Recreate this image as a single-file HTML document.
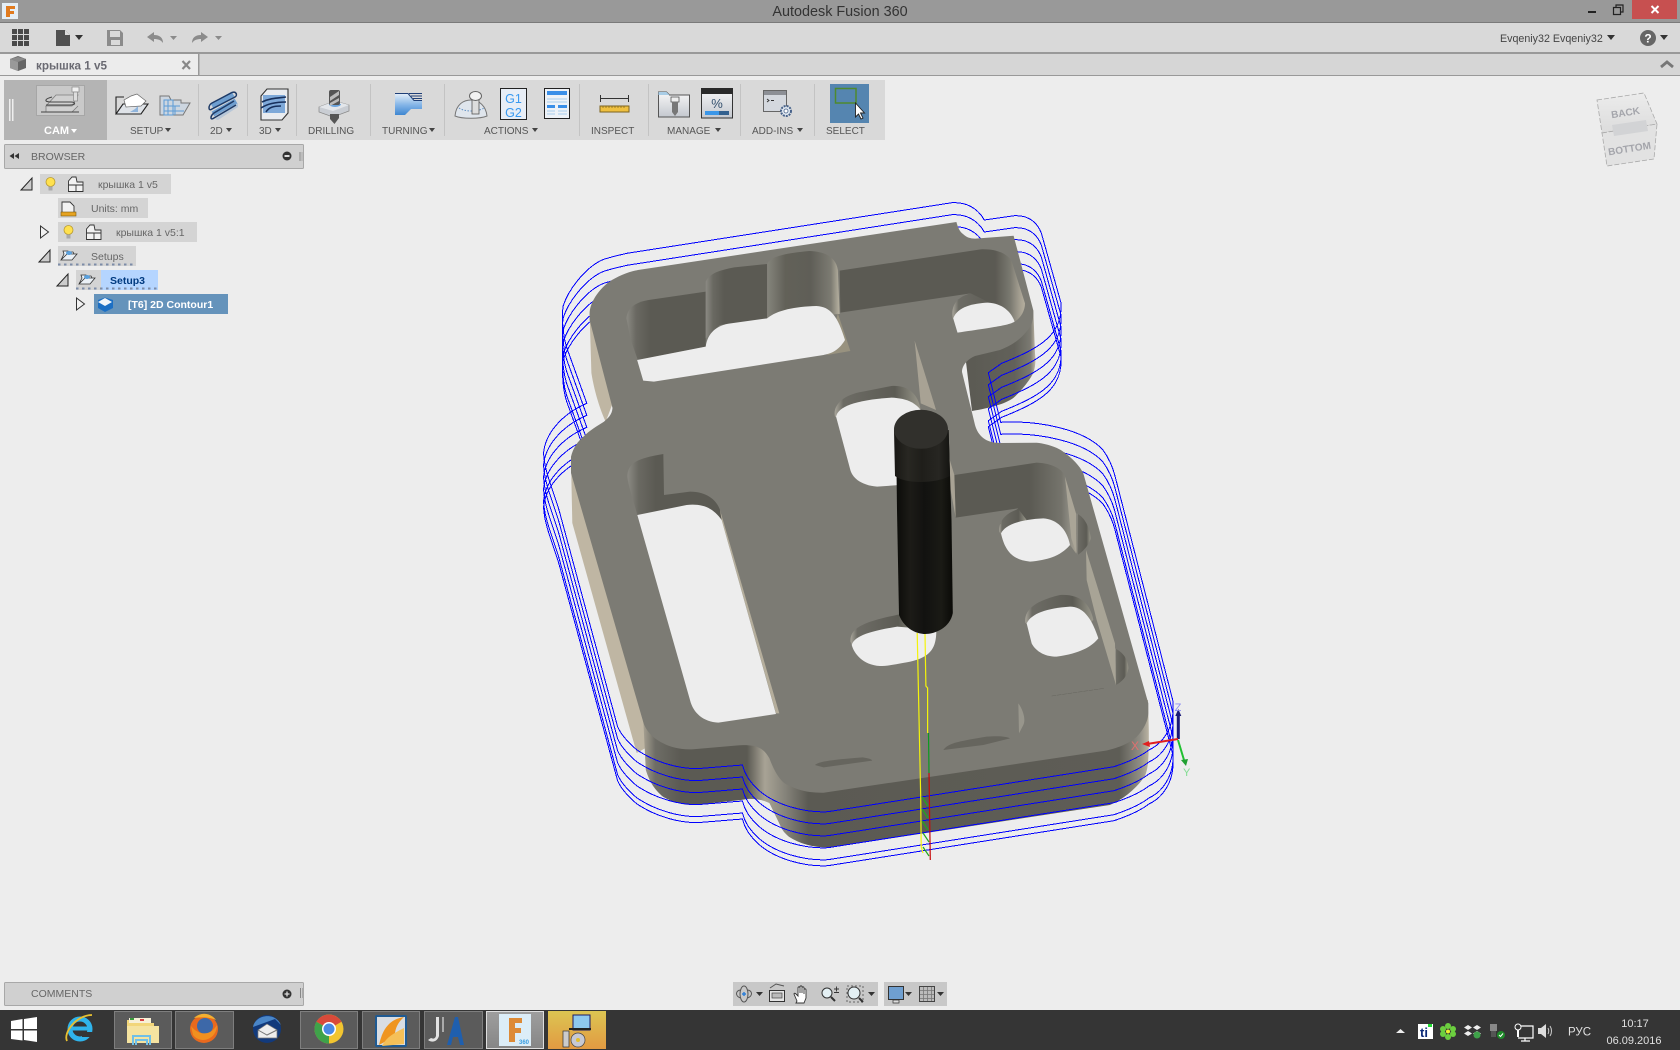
<!DOCTYPE html>
<html lang="ru"><head><meta charset="utf-8"><title>Autodesk Fusion 360</title>
<style>
html,body{margin:0;padding:0;width:1680px;height:1050px;overflow:hidden;background:#ededed}
svg{display:block;position:absolute;left:0;top:0}
text{font-family:"Liberation Sans","Noto Sans CJK SC",sans-serif}
.lb{font-size:10px;fill:#555}
.tr{font-size:10.5px;fill:#666}
</style></head><body>
<svg width="1680" height="1050" viewBox="0 0 1680 1050" xmlns="http://www.w3.org/2000/svg">
<defs>
<linearGradient id="band" gradientUnits="userSpaceOnUse" x1="640" y1="0" x2="1150" y2="0">
<stop offset="0" stop-color="#b5ae9d"/><stop offset=".03" stop-color="#6e6d66"/><stop offset=".08" stop-color="#5b5a53"/><stop offset=".21" stop-color="#5b5a53"/><stop offset=".245" stop-color="#a8a395"/><stop offset=".285" stop-color="#85837a"/><stop offset=".33" stop-color="#5b5a53"/><stop offset=".94" stop-color="#5e5d56"/><stop offset=".98" stop-color="#8f8d84"/><stop offset="1" stop-color="#c0b8a6"/>
</linearGradient>
<linearGradient id="wr" x1="0" x2="1" y1="0" y2="0"><stop offset="0" stop-color="#5b5a53"/><stop offset=".7" stop-color="#62615a"/><stop offset=".93" stop-color="#7b7a72"/><stop offset="1" stop-color="#bdb6a5"/></linearGradient>
<linearGradient id="wl" x1="0" x2="1" y1="0" y2="0"><stop offset="0" stop-color="#8b8a83"/><stop offset=".12" stop-color="#6a6962"/><stop offset=".3" stop-color="#5b5a53"/><stop offset="1" stop-color="#5b5a53"/></linearGradient>
<linearGradient id="wc" x1="0" x2="1" y1="0" y2="0"><stop offset="0" stop-color="#85847c"/><stop offset=".25" stop-color="#626158"/><stop offset=".6" stop-color="#5f5e57"/><stop offset=".88" stop-color="#7c7b72"/><stop offset="1" stop-color="#b8b2a1"/></linearGradient>
<linearGradient id="we" x1="0" x2="1" y1="0" y2="0"><stop offset="0" stop-color="#5b5a53"/><stop offset=".62" stop-color="#5b5a53"/><stop offset=".88" stop-color="#75746c"/><stop offset=".95" stop-color="#8f8d84"/><stop offset="1" stop-color="#a8a394"/></linearGradient>
<linearGradient id="wd" x1="0" x2="1" y1="0" y2="0"><stop offset="0" stop-color="#5b5a53"/><stop offset=".84" stop-color="#5b5a53"/><stop offset=".92" stop-color="#7a7970"/><stop offset=".97" stop-color="#a39e90"/><stop offset="1" stop-color="#b5af9f"/></linearGradient>
<linearGradient id="hw" x1="0" x2="1" y1="0" y2="0"><stop offset="0" stop-color="#a9a69b"/><stop offset=".1" stop-color="#6d6c65"/><stop offset=".7" stop-color="#5c5b54"/><stop offset=".9" stop-color="#858479"/><stop offset="1" stop-color="#9a978b"/></linearGradient>
<linearGradient id="tool" x1="0" x2="1" y1="0" y2="0"><stop offset="0" stop-color="#0b0b08"/><stop offset=".25" stop-color="#1c1b17"/><stop offset=".5" stop-color="#121210"/><stop offset=".8" stop-color="#1a1a15"/><stop offset="1" stop-color="#0a0a07"/></linearGradient>
<linearGradient id="tool2" x1="0" x2="1" y1="0" y2="0"><stop offset="0" stop-color="#181714"/><stop offset=".25" stop-color="#282722"/><stop offset=".5" stop-color="#1f1e1a"/><stop offset=".8" stop-color="#272622"/><stop offset="1" stop-color="#141411"/></linearGradient>
<linearGradient id="cube" x1="0" x2="0" y1="0" y2="1"><stop offset="0" stop-color="#ececec"/><stop offset="1" stop-color="#dcdcdc"/></linearGradient>
<linearGradient id="act" x1="0" x2="0" y1="0" y2="1"><stop offset="0" stop-color="#9e9e9e"/><stop offset="1" stop-color="#868686"/></linearGradient>
<linearGradient id="ylw" x1="0" x2="0" y1="0" y2="1"><stop offset="0" stop-color="#dcc552"/><stop offset="1" stop-color="#e29a42"/></linearGradient>
<linearGradient id="blu" x1="0" x2="0" y1="0" y2="1"><stop offset="0" stop-color="#e2edf8"/><stop offset=".55" stop-color="#7fb2e6"/><stop offset="1" stop-color="#3f87d1"/></linearGradient>
<linearGradient id="gr" x1="0" x2="0" y1="0" y2="1"><stop offset="0" stop-color="#f7f7f7"/><stop offset="1" stop-color="#c4c8cf"/></linearGradient>
<path id="c" fill="none" stroke="#0000ff" stroke-width="1" shape-rendering="crispEdges" d="M952,202.7 C965,202 977,207 984.3,220 L1014.6,215.7 C1030,215 1038,224 1041.4,233.3 L1061,303 C1063,335 1040,348 1001.7,363.3 L988.3,372.7 L1000.7,422.3 C1040,420 1085,430 1103,450 C1110,460 1113,468 1115,476 L1172.7,700 C1176,730 1160,745 1148.8,750 C1140,757 1125,763 1114,766.7 L827.9,811.7 C805,813 775,805 758.5,790 C750,782 745,775 742.5,765 L702,768.3 C680,770 655,762 637,750 C625,740 620,732 617.6,726.7 L559,510 C553,490 544,470 543.6,453 C545,435 560,415 586.8,403.3 L566.4,346.7 C563,335 562,320 562.9,306.7 C568,290 585,268 602,260 C610,257 620,255 627,253.3 Z"/>
</defs>

<!-- backgrounds -->
<rect width="1680" height="1050" fill="#ededed"/>
<rect width="1680" height="22" fill="#999"/><rect y="22" width="1680" height="1" fill="#7a7a7a"/>
<rect y="23" width="1680" height="29" fill="#d9d9d9"/><rect y="52" width="1680" height="2" fill="#999"/>
<rect y="54" width="1680" height="21" fill="#d6d6d6"/><rect y="75" width="1680" height="1" fill="#999"/>
<rect y="54" width="198" height="21" fill="#ececec"/><rect x="198" y="54" width="1.5" height="21" fill="#999"/>

<!-- title bar -->
<rect x="2" y="3" width="16" height="16" fill="#e4eef6"/>
<path d="M6 6h9v3h-5v2h4v3h-4v3H6z" fill="#e07b20"/>
<text x="840" y="16" text-anchor="middle" font-size="14.4" fill="#333">Autodesk Fusion 360</text>
<rect x="1588" y="11" width="8" height="2" fill="#222"/>
<path d="M1613.5 7.500h7v7h-7zM1616 7.500v-2.500h7v7h-2.500" fill="none" stroke="#222" stroke-width="1.200"/>
<rect x="1632" y="0" width="45" height="19" fill="#c75050"/>
<path d="M1651.500 6l7 7m0-7l-7 7" stroke="#fff" stroke-width="2"/>

<!-- quick access -->
<g fill="#4a4a4a"><rect x="12" y="29" width="5" height="5"/><rect x="18" y="29" width="5" height="5"/><rect x="24" y="29" width="5" height="5"/><rect x="12" y="35" width="5" height="5"/><rect x="18" y="35" width="5" height="5"/><rect x="24" y="35" width="5" height="5"/><rect x="12" y="41" width="5" height="5"/><rect x="18" y="41" width="5" height="5"/><rect x="24" y="41" width="5" height="5"/></g>
<path d="M56 30h9l5 5v11H56z" fill="#505050"/><path d="M65 30v5h5z" fill="#dcdcdc"/>
<path d="M75 35h8l-4 5z" fill="#333"/>
<path d="M107 30h13l3 3v13h-16z" fill="#8b8b8b"/><rect x="110" y="31" width="10" height="6" fill="#d9d9d9"/><rect x="111" y="40" width="9" height="5" fill="#d9d9d9"/>
<path d="M147 37l7-5v3c6 0 9 3 9 8-2-3-5-4-9-4v3z" fill="#8b8b8b"/><path d="M170 36h7l-3.500 4z" fill="#8b8b8b"/>
<path d="M208 37l-7-5v3c-6 0-9 3-9 8 2-3 5-4 9-4v3z" fill="#8b8b8b"/><path d="M215 36h7l-3.500 4z" fill="#8b8b8b"/>

<text x="1500" y="42" font-size="10.7" fill="#444">Evqeniy32 Evqeniy32</text>
<path d="M1607 35h8l-4 5z" fill="#333"/>
<circle cx="1648" cy="38" r="8" fill="#666"/><text x="1648" y="42.500" text-anchor="middle" font-size="12" font-weight="bold" fill="#fff">?</text>
<path d="M1660 35h8l-4 5z" fill="#333"/>

<!-- tab -->
<path d="M10 59l8-3 8 3v9l-8 3-8-3z" fill="#666"/><path d="M10 59l8-2 8 2-8 3z" fill="#8a8a8a"/><path d="M18 62v9l-8-3v-9z" fill="#999"/>
<text x="36" y="69.500" font-size="11.700" font-weight="bold" fill="#6a6a72">крышка 1 v5</text>
<path d="M182.500 61l7.500 8m0-8l-7.500 8" stroke="#888" stroke-width="2.200"/>
<path d="M1661 67l6-5 6 5" fill="none" stroke="#777" stroke-width="2.800"/>

<!-- ribbon -->
<rect x="4" y="80" width="881" height="60" fill="#d9d9d9"/>
<rect x="4" y="80" width="103" height="60" fill="#b4b4b4"/>
<g fill="#c3c3c3"><rect x="198" y="84" width="1" height="52"/><rect x="247" y="84" width="1" height="52"/><rect x="296" y="84" width="1" height="52"/><rect x="370" y="84" width="1" height="52"/><rect x="444" y="84" width="1" height="52"/><rect x="579" y="84" width="1" height="52"/><rect x="648" y="84" width="1" height="52"/><rect x="740" y="84" width="1" height="52"/><rect x="814" y="84" width="1" height="52"/></g>
<rect x="9" y="99" width="1.500" height="22" fill="#eee"/><rect x="12" y="99" width="1.500" height="22" fill="#eee"/>
<!-- CAM -->
<rect x="36.500" y="85.500" width="48" height="30" fill="#c9c9c9" stroke="#a6a6a6"/>
<path d="M46 106l10-11h22l-6 11H46zM46 106v6h26l6-6" fill="#d0d0d0" stroke="#7d7d7d" stroke-width=".8"/>
<path d="M41 112h38M52 97c-8 2-8 5-1 5h20c5 0 5 3-1 3H46" fill="none" stroke="#444" stroke-width="1"/>
<rect x="72" y="87" width="7" height="5" fill="#f1f1f1" stroke="#888" stroke-width=".7"/><rect x="73.500" y="92" width="4" height="9" fill="#ddd" stroke="#888" stroke-width=".7"/>
<text x="44" y="134" font-size="11" font-weight="bold" fill="#fff">CAM</text><path d="M71 129h6l-3 4z" fill="#fff"/>
<!-- Setup -->
<path d="M116 114V97h8" fill="none" stroke="#222" stroke-width="1.100"/>
<path d="M116 114L123 104H148L141 114Z" fill="#dfe3e8" stroke="#222" stroke-width="1.100"/>
<path d="M124 100L131 96L137 94L146 101L141 106L126 107Z" fill="#fff" stroke="#666" stroke-width=".7"/>
<path d="M130 112l5-3 3-3v6z" fill="#8fb4dc"/>
<path d="M160 96h9l2 4h10v3h9l-7 12h-23z" fill="#cdd6e0" stroke="#777" stroke-width="1"/><path d="M164 100h9v15h-9zM164 106h16M164 111h20M168 100v15M175 106v9" fill="none" stroke="#5b9bd6" stroke-width="1"/>
<!-- 2D -->
<path d="M215 119L238 103V107L218 120Z" fill="#b8c7d8"/>
<path d="M233 94L212 106M236 101L213 114" stroke="#6f9fd0" stroke-width="5.500"/>
<path d="M232 92.500C236 91 238 95 235 97L212 109C208 112 208 105 212 103L232 92.500M234 101L214 113C210 116 210 121 214 118L236 105" fill="none" stroke="#1e3a66" stroke-width="1.500"/>
<!-- 3D -->
<path d="M261 96l6-7h21v24l-6 7h-21z" fill="#e9ecf0" stroke="#333" stroke-width="1.100"/><path d="M263 95h22v18h-22z" fill="#7ea9d9"/>
<path d="M262 102c8-4 16-4 24-5M261 108c6-4 14-6 25-6M266 112c3-5 8-6 15-6" fill="none" stroke="#17305c" stroke-width="1.600"/>
<!-- Drilling -->
<path d="M319 107l16-6 14 4v6l-16 6-14-5z" fill="#c9cdd3" stroke="#888" stroke-width=".7"/><path d="M319 107l16-6 14 4-16 6z" fill="#e3e6ea"/>
<path d="M329 104a6 3 0 0 0 12 0" fill="#6aa4de"/>
<rect x="329" y="90" width="11" height="15" rx="2" fill="#555"/><path d="M330 97l9-6v4l-9 6zM330 103l9-5v3l-9 5z" fill="#bbb"/>
<path d="M330 114h9v4l-4.500 6-4.500-5z" fill="#555"/>
<!-- Turning -->
<path d="M395 94H408L414 101H422V109H411L405 115H395Z" fill="url(#blu)"/>
<path d="M395 93.500H408L414 100.500H422M409 93.500H422M411 96H422M413 98.500H422" fill="none" stroke="#1f3f77" stroke-width="1"/>
<!-- Actions -->
<path d="M455 116C456 104 464 100 471 100C479 100 486 106 487 116C480 119 462 119 455 116Z" fill="#dfe5ec" stroke="#777"/>
<path d="M459 108C465 112 478 112 484 108" fill="none" stroke="#5f8fc4" stroke-dasharray="1.500 1.500"/>
<rect x="472" y="97" width="7" height="17" fill="#ddd" stroke="#555" stroke-width=".8"/><ellipse cx="475.500" cy="96" rx="6" ry="4.500" fill="#f2f2f2" stroke="#666"/>
<rect x="500.500" y="88.500" width="26" height="31" fill="#e8eef6" stroke="#222"/>
<text x="513.500" y="103" text-anchor="middle" font-size="12.500" fill="#3a9af0">G1</text><text x="513.500" y="117" text-anchor="middle" font-size="12.500" fill="#3a9af0">G2</text>
<rect x="544.500" y="88.500" width="25" height="30" fill="#eef2f7" stroke="#222"/>
<rect x="547" y="91" width="20" height="4" fill="#3a8fe8"/><rect x="547" y="105" width="8" height="3" fill="#3a8fe8"/><rect x="558" y="105" width="9" height="3" fill="#3a8fe8"/>
<path d="M547 99h20M547 102h20M547 111h8M558 111h9M547 114h8M558 114h9" stroke="#a8cdee"/>
<!-- Inspect -->
<path d="M600.500 95v7M628.500 95v7M600 98.500h29" stroke="#333" fill="none"/>
<rect x="600" y="106" width="29" height="6" fill="#efc040" stroke="#7d6420"/>
<path d="M603 106v2M606 106v2M609 106v2M612 106v2M615 106v2M618 106v2M621 106v2M624 106v2" stroke="#7d6420" stroke-width=".7"/>
<!-- Manage -->
<path d="M658.500 95v22h31V95h-20l-3-3h-8z" fill="url(#gr)" stroke="#555"/><path d="M658.500 92h8l3 3h-11z" fill="#a9cde6"/>
<rect x="671" y="97" width="8" height="5" fill="#eee" stroke="#444" stroke-width=".7"/><path d="M672 102h6v10l-3 4-3-4z" fill="#777"/>
<rect x="701.500" y="88.500" width="31" height="29.500" fill="url(#gr)" stroke="#333"/><rect x="701" y="88" width="32" height="6" fill="#2a2a2a"/>
<text x="717" y="108" text-anchor="middle" font-size="13" fill="#33506e">%</text><rect x="705" y="111" width="14" height="4" fill="#3a96e8"/><rect x="719" y="111" width="10" height="4" fill="#33618f"/>
<!-- Add-ins -->
<rect x="763.500" y="90.500" width="23" height="21" fill="#d4d8de" stroke="#666"/><rect x="764" y="91" width="22" height="4" fill="#8c8f95"/>
<path d="M767 99l2 1.500-2 1.500M771 100.500h3" stroke="#333" fill="none" stroke-width=".9"/>
<circle cx="786" cy="111" r="5" fill="#dfe7f0" stroke="#47628a" stroke-width="2" stroke-dasharray="2 1"/><circle cx="786" cy="111" r="2" fill="#fff" stroke="#47628a" stroke-width=".8"/>
<!-- Select -->
<rect x="830" y="84" width="39" height="39" fill="#5585b0"/>
<rect x="835.500" y="88.500" width="20.500" height="14.500" fill="none" stroke="#4e8a2e" stroke-width="1.500"/>
<path d="M855.500 103v14l3-3 2.500 5 2-1-2.500-5h4z" fill="#fff" stroke="#222" stroke-width=".9"/>
<!-- labels -->
<text class="lb" x="130" y="134">SETUP</text><text class="lb" x="210" y="134">2D</text><text class="lb" x="259" y="134">3D</text><text class="lb" x="308" y="134">DRILLING</text><text class="lb" x="382" y="134">TURNING</text><text class="lb" x="484" y="134">ACTIONS</text><text class="lb" x="591" y="134">INSPECT</text><text class="lb" x="667" y="134">MANAGE</text><text class="lb" x="752" y="134">ADD-INS</text><text class="lb" x="826" y="134">SELECT</text>
<g fill="#444"><path d="M165 128h6l-3 4z"/><path d="M226 128h6l-3 4z"/><path d="M275 128h6l-3 4z"/><path d="M429 128h6l-3 4z"/><path d="M532 128h6l-3 4z"/><path d="M715 128h6l-3 4z"/><path d="M797 128h6l-3 4z"/></g>

<!-- browser -->
<rect x="4.500" y="144.500" width="299" height="24" rx="1" fill="#d0d0d0" stroke="#a8a8a8"/>
<path d="M14 153v6l-4.500-3zM19 153v6l-4.500-3z" fill="#333"/>
<text x="31" y="160" font-size="10.500" fill="#666">BROWSER</text>
<circle cx="287" cy="156" r="4.500" fill="#333"/><rect x="284.500" y="155" width="5" height="2" fill="#ddd"/>
<rect x="299.500" y="152" width="1" height="9" fill="#888"/><rect x="301.500" y="152" width="1" height="9" fill="#aaa"/>

<rect x="40" y="174" width="131" height="20" fill="#d4d4d4"/>
<rect x="58" y="198" width="90" height="20" fill="#d4d4d4"/>
<rect x="58" y="222" width="139" height="20" fill="#d4d4d4"/>
<rect x="58" y="246" width="78" height="20" fill="#d4d4d4"/>
<rect x="76" y="270" width="25" height="20" fill="#d4d4d4"/><rect x="101" y="270" width="57" height="20" fill="#b5d5ff"/>
<rect x="94" y="294" width="134" height="20" fill="#6593bb"/>

<path d="M32 178v12H21z" fill="#ccc" stroke="#222"/><path d="M50 250v12H39z" fill="#ccc" stroke="#222"/><path d="M68 274v12H57z" fill="#ccc" stroke="#222"/>
<path d="M40.500 226v12l8-6z" fill="#f2f2f2" stroke="#333"/><path d="M76.500 298v12l8-6z" fill="#f2f2f2" stroke="#333"/>
<!-- bulbs -->
<circle cx="50.500" cy="182" r="4.500" fill="#ffe14f" stroke="#b89a30" stroke-width=".8"/><rect x="48.500" y="186.500" width="4" height="4" fill="#aaa"/>
<circle cx="68.500" cy="230" r="4.500" fill="#ffe14f" stroke="#b89a30" stroke-width=".8"/><rect x="66.500" y="234.500" width="4" height="4" fill="#aaa"/>
<!-- bodies -->
<path d="M68.500 191.500V181L72 177H76L77 182H83V191.500ZM76 191.500V185H83M68.500 185H76" fill="#f2f2f2" stroke="#333" stroke-width=".9"/>
<path d="M86.500 239.500V229L90 225H94L95 230H101V239.500ZM94 239.500V233H101M86.500 233H94" fill="#f2f2f2" stroke="#333" stroke-width=".9"/>
<!-- units -->
<path d="M62 202h8l4 4v9H62z" fill="#f2f2f2" stroke="#333" stroke-width=".9"/><rect x="61" y="212" width="15" height="4" fill="#e6a320" stroke="#7a5a10" stroke-width=".6"/>
<!-- setup icons -->
<path d="M61 260l3-6-1-3h5l1 1h4l1 2h-7M61 260l11 0 5-6h-10z" fill="#eaf0f6" stroke="#333" stroke-width=".8"/><ellipse cx="69" cy="253" rx="3" ry="2" fill="#5aa0dc"/>
<path d="M79 284l3-6-1-3h5l1 1h4l1 2h-7M79 284l11 0 5-6h-10z" fill="#eaf0f6" stroke="#333" stroke-width=".8"/><ellipse cx="87" cy="277" rx="3" ry="2" fill="#5aa0dc"/>
<path d="M58 264.500h78" stroke="#7c8ca8" stroke-width="2" stroke-dasharray="2.500 3.500"/>
<path d="M76 288.500h82" stroke="#7c8ca8" stroke-width="2" stroke-dasharray="2.500 3.500"/>
<path d="M98 300l7-2.500 8 2.500v8l-8 4-7-4z" fill="#1c6fc4"/><path d="M98 302l7-4 7 4-7 4z" fill="#f2f6fa"/>
<text class="tr" x="98" y="188">крышка 1 v5</text>
<text class="tr" x="91" y="212">Units: mm</text>
<text class="tr" x="116" y="236">крышка 1 v5:1</text>
<text class="tr" x="91" y="260">Setups</text>
<text x="110" y="284" font-size="10.500" font-weight="bold" fill="#003a80">Setup3</text>
<text x="128" y="308" font-size="10.500" font-weight="bold" fill="#fff">[T6] 2D Contour1</text>

<!-- comments -->
<rect x="4.500" y="982.500" width="299" height="23" rx="1" fill="#d0d0d0" stroke="#a8a8a8"/>
<text x="31" y="997" font-size="10.500" fill="#666">COMMENTS</text>
<circle cx="287" cy="994" r="4.500" fill="#333"/><path d="M284.500 994h5M287 991.500v5" stroke="#ddd" stroke-width="1.300"/>
<rect x="300" y="988" width="1" height="10" fill="#888"/><rect x="302" y="988" width="1" height="10" fill="#aaa"/>

<!-- VIEWCUBE -->
<path d="M1597 100l47-7 13 31-55 9z" fill="url(#cube)" stroke="#aaa" stroke-width=".8" stroke-dasharray="5 2"/>
<path d="M1602 133l55-9-3 35-47 7z" fill="#e2e2e2" stroke="#aaa" stroke-width=".8" stroke-dasharray="5 2"/>
<path d="M1612 125l34-5 2 11-34 5z" fill="#d2d3d5"/>
<text transform="translate(1626 116) rotate(-9)" text-anchor="middle" font-size="10" font-weight="bold" fill="#a4a5ab">BACK</text>
<text transform="translate(1630 152) rotate(-9)" text-anchor="middle" font-size="10" font-weight="bold" fill="#a4a5ab">BOTTOM</text>

<!-- 3D PART -->
<path d="M589.600 313L591.400 373C594 390 600 410 605.700 421.700L612 405Z" fill="#bfb6a3"/>
<path d="M571 460L572.300 523L636.700 753L660 740L650 700Z" fill="#bfb6a3"/>
<path d="M643 715L645.800 770C650 783 655 790 663 796.700C672 802 682 805 693.500 805L741 800C750 798 755 799 760.700 800C765 801 767 802 769.400 803L780 825C783 832 786 834 788.900 836.700C800 844 815 848 832 847.300L1109.800 805C1122 800 1135 790 1144.500 776.700C1148 770 1149 760 1148.800 730L1148 700Z" fill="url(#band)"/>
<path d="M966 362C968 358 975 355 980 354C995 350 1005 346 1011.700 340C1018 335 1023 328 1025 321.700L1033.300 310L1035 353.300C1036 362 1035 368 1033.300 373C1028 383 1020 392 1013.300 398C1005 404 990 408 972 411Z" fill="url(#wr)"/>
<!-- toolpath -->
<use href="#c"/><use href="#c" y="12"/><use href="#c" y="24"/><use href="#c" y="36"/><use href="#c" y="48"/><use href="#c" y="54"/>
<!-- face -->
<path d="M589.600 313C590 303 598 290 609 282C618 276 628 272 638 270L956.400 222C958 228 960 232 963 234C967 238 972 239 977 238.500L1013.600 235.700L1033.200 310C1034 322 1030 328 1027 331C1020 340 1012 345 1000 350L975 356C968 359 962 365 962 372L971.800 411.700L975 425C978 436 986 443 1000 443L1036.700 442.700C1050 444 1060 449 1063.300 451.700C1072 458 1080 466 1083.300 473.300L1148.300 703.300L1148.300 713.300C1148 722 1143 730 1136.700 736.700C1128 744 1120 747 1106.700 750.500L823.600 792.700C805 793 795 789 784.500 783.300C778 778 773 768 769.400 758.300C766 752 762 748 754 746C748 745 742 745 736.800 745.500L693.500 749.300C680 750 670 747 663.100 743.300C652 738 646 730 643.600 723.300L571 473L571 456.700C573 448 578 441 583.300 436.700C590 430 597 426 603.900 421.700C608 418 612 415 612.500 408L589.600 320Z" fill="#7c7b74"/>

<!-- upper pockets in zoom coordinates -->
<g transform="translate(520 190) scale(.35714 .33333)">
<path d="M298 385C300 350 330 335 360 330L520 305V470L330 510L310 450Z" fill="url(#wl)"/>
<path d="M520 275C530 250 560 240 600 232L692 222V390L560 405L520 445Z" fill="url(#wl)"/>
<path d="M692 222C700 200 740 190 810 183C860 185 885 205 890 240L895 372L692 385Z" fill="url(#wc)"/>
<path d="M895 242L1290 178C1340 176 1368 195 1377 215L1414 340C1414 365 1400 385 1385 395L1225 330L1262 310L897 368Z" fill="url(#wd)"/>
<path d="M1212 385C1205 345 1225 320 1262 310L1300 330L1385 395L1213 385Z" fill="url(#hw)"/>
<path d="M890 370L925 483L860 495Z" fill="#98927f"/>
<path d="M328 510L520 470C525 430 550 405 590 400L692 385C720 360 770 350 830 348C870 350 890 380 910 450C890 485 870 490 850 495L375 575L345 572Z" fill="#ededed"/>
<path d="M1213 385C1225 350 1270 340 1310 338C1350 340 1375 365 1385 395C1370 405 1340 410 1225 428Z" fill="#ededed"/>
<path d="M882 680C875 650 900 615 960 605L1040 588C1085 585 1115 610 1122 660L1100 700L900 690Z" fill="url(#hw)"/>
<path d="M885 680C890 650 940 630 1040 623C1085 625 1110 640 1125 665L1130 880L1000 890C950 885 930 860 925 840Z" fill="#ededed"/>
<path d="M1105 452L1165 660L1122 640Z" fill="#a8a294"/>
</g>
<!-- wall E, small holes -->
<g transform="translate(920 430) scale(.33333)">
<path d="M103 135L350 98C400 100 430 120 435 140L468 370L450 345L243 310L240 280L295 235L107 263Z" fill="url(#we)"/>
<path d="M88 85L103 135L107 263L90 170Z" fill="#a8a294"/>
<path d="M238 305C235 275 255 250 295 237L320 270L245 320Z" fill="url(#hw)"/>
<path d="M243 310C255 285 300 268 370 265C410 268 440 295 450 345C420 380 380 390 330 395C280 390 255 365 243 310Z" fill="#ededed"/>
<path d="M435 140L468 250L470 372L454 325Z" fill="#aaa597"/>
<path d="M470 250C495 262 510 295 512 325C510 340 490 365 472 375Z" fill="url(#hw)"/>
<path d="M498 360L585 640L588 765L530 570L500 450Z" fill="#a8a496"/>
<path d="M585 655C615 670 625 695 625 715C622 740 605 755 588 765Z" fill="url(#hw)"/>
<path d="M316 578C312 545 335 515 420 495C480 492 510 520 520 570L500 590L330 590Z" fill="url(#hw)"/>
<path d="M320 580C335 550 380 535 450 530C490 530 515 565 535 625C515 650 480 670 410 680C370 680 345 660 335 640Z" fill="#ededed"/>
<path d="M395 798L552 775" stroke="#5b5a53" stroke-width="1" fill="none" stroke-dasharray="14 2"/>
<path d="M295 820C310 840 318 870 310 885L297 910Z" fill="#98968c"/>
<path d="M70 960C85 940 110 935 200 920C240 917 260 920 270 925L190 945Z" fill="#66655e"/>
</g>
<g transform="translate(520 510) scale(.43367 .33333)">
<path d="M762 395C760 355 790 335 880 312L920 360L770 420Z" fill="url(#hw)"/>
<path d="M765 405C770 380 800 365 870 350L960 360C960 410 950 440 900 455C870 462 850 468 830 468C790 465 770 430 765 405Z" fill="#ededed"/>
<path d="M680 765C690 755 710 750 790 742C805 745 812 748 812 752L700 772Z" fill="#66655e"/>
</g>
<!-- left big slot -->
<g transform="translate(540 420) scale(.33333)">
<path d="M262 170C262 130 290 115 370 102L372 225L450 215C500 215 530 240 540 270L545 300L292 285C280 240 265 200 262 170Z" fill="url(#wl)"/>
<path d="M540 270L718 880L708 880L545 300Z" fill="#b5ae9c"/>
<path d="M292 285L440 255C490 250 520 265 545 300L708 882L535 908C490 905 460 880 450 840Z" fill="#ededed"/>
</g>
<!-- tool -->
<path d="M896 430L897 510L899 615C905 630 918 634 925 634C935 634 950 628 952.800 613L951.500 520L948.600 430Z" fill="url(#tool)"/>
<path d="M894 430L895 476C905 484 935 484 950 476L948.600 430Z" fill="url(#tool2)"/>
<ellipse cx="921" cy="429.300" rx="27" ry="19.500" fill="#31302c"/>
<!-- tool lines -->
<path d="M917.200 633L920.700 796.700L921.200 846.700L923 853M925 634L925.900 686L927.600 688L927.600 733" fill="none" stroke="#f4f40a" stroke-width="1.200"/>
<path d="M928.500 733L929 773" stroke="#0c9a20" stroke-width="1.200"/>
<path d="M929 773L930.300 860" stroke="#c80a0a" stroke-width="1.200"/>
<path d="M922 797l6 9M922 809l6 9M922 821l6 9M923 833l6 9M923 847l6 9" stroke="#22a81e" stroke-width="1.200" fill="none"/>
<!-- triad -->
<rect x="1176.800" y="713" width="3" height="26" fill="#1a1a78"/><path d="M1178.300 709l3 7h-6z" fill="#1a1a78"/>
<path d="M1178 739L1147 744" stroke="#e02020" stroke-width="2"/><path d="M1142 744l7-3 1 6z" fill="#e02020"/>
<path d="M1178 740L1184 760" stroke="#20c030" stroke-width="2"/><path d="M1186 766l-5-6 7-1z" fill="#20a030"/>
<text x="1178" y="711" text-anchor="middle" font-size="11" fill="#8c8cf0">Z</text>
<text x="1131" y="750" font-size="12" fill="#e07070">X</text>
<text x="1183" y="776" font-size="11" fill="#80dc90">Y</text>

<!-- bottom nav -->
<rect x="733" y="982" width="145" height="24" fill="#c8c8c8"/><rect x="884" y="982" width="63" height="24" fill="#c8c8c8"/>
<ellipse cx="744" cy="994" rx="4" ry="8" fill="none" stroke="#555"/><path d="M741 990C735 990 735 997 741 998M747 990C753 990 753 997 747 998" fill="none" stroke="#555"/><path d="M742 994h4M744 992v4" stroke="#2d7fd8" stroke-width="1.500"/>
<path d="M756 992h7l-3.500 4z" fill="#333"/>
<rect x="769.500" y="990.500" width="15" height="11" fill="#e4e4e4" stroke="#333"/><rect x="772" y="993" width="10" height="5" fill="#bbb" stroke="#444" stroke-width=".7"/><path d="M770 988l6-4 8 2" fill="none" stroke="#555"/>
<path d="M797 1001l-3-7c0-1 1-1 2 0l2 2v-8c0-1.500 2-1.500 2 0v5v-6c0-1.500 2-1.500 2 0v6v-5c0-1.500 2-1.500 2 0v6v-4c0-1.500 2-1.500 2 0v8l-2 5h-8z" fill="#fff" stroke="#333" stroke-width=".9"/>
<circle cx="827" cy="993" r="5" fill="#e4f0f4" stroke="#333"/><path d="M831 997l4 4" stroke="#333" stroke-width="2"/><path d="M834 989h5M836.500 986.500v5M834 992.500h5" stroke="#333" stroke-width=".9"/>
<rect x="847" y="986" width="16" height="16" fill="none" stroke="#666" stroke-dasharray="2 2"/><circle cx="854" cy="993" r="6" fill="#e4f0f4" stroke="#333"/><path d="M859 998l4 4" stroke="#333" stroke-width="2"/>
<path d="M868 992h7l-3.500 4z" fill="#333"/>
<rect x="888.500" y="986.500" width="15" height="13" fill="#6f9fd0" stroke="#333"/><path d="M893 1000h6v3h-6z" fill="#ddd" stroke="#333" stroke-width=".7"/>
<path d="M905 992h7l-3.500 4z" fill="#333"/>
<rect x="919.500" y="986.500" width="15" height="15" fill="#bbb" stroke="#444"/><path d="M923.500 987v14M927.500 987v14M931.500 987v14M920 990.500h14M920 994.500h14M920 998.500h14" stroke="#777" stroke-width=".8"/>
<path d="M937 992h7l-3.500 4z" fill="#333"/>

<!-- taskbar -->
<rect y="1010" width="1680" height="40" fill="#353535"/>
<path d="M11 1021l11.500-2v10H11zM24 1019l13-2v12H24zM11 1030.500h11.500v10L11 1039zM24 1030.500h13V1042l-13-2z" fill="#fff"/>
<g fill="#5b5b5b" stroke="#7e7e7e"><rect x="114.500" y="1011.500" width="57" height="37"/><rect x="175.500" y="1011.500" width="58" height="37"/><rect x="300.500" y="1011.500" width="57" height="37"/><rect x="362.500" y="1011.500" width="57" height="37"/><rect x="424.500" y="1011.500" width="58" height="37"/></g>
<rect x="486.500" y="1011.500" width="57" height="37" fill="url(#act)" stroke="#dedede"/>
<rect x="548" y="1011" width="58" height="38" fill="url(#ylw)"/>
<!-- IE -->
<g transform="translate(80 1029)"><circle r="10" fill="none" stroke="#2fb4ec" stroke-width="5"/><rect x="-8" y="-2.500" width="17" height="4" fill="#2fb4ec"/><rect x="2" y="3" width="10" height="5" fill="#353535"/><path d="M-13 12C-17 4-4-14 12-14" fill="none" stroke="#e8c030" stroke-width="1.800"/></g>
<!-- folder -->
<path d="M127 1020h9l2 3h16v20h-27z" fill="#f2d67a"/><rect x="129" y="1018" width="22" height="5" fill="#f7f0d6"/><path d="M130 1018h4v2h-4z" fill="#3a9a3a"/><rect x="140" y="1019" width="4" height="2" fill="#d84040"/><rect x="127" y="1026" width="32" height="17" fill="#f5e3a0"/><path d="M133 1045v-9h17v9M136 1045v-5h11v5" fill="none" stroke="#6fc0e8" stroke-width="2"/>
<!-- firefox -->
<circle cx="204" cy="1029" r="14" fill="#e8691e"/><circle cx="205" cy="1026" r="8" fill="#3d68a8"/><path d="M191 1026c6 8 18 12 26-1 0 14-16 20-24 10z" fill="#f09020"/><path d="M194 1018c6-6 16-6 22 2-6-3-14-3-22-2z" fill="#f4b030"/>
<!-- thunderbird -->
<circle cx="267" cy="1029" r="14" fill="#123a7c"/><path d="M253 1027c2-12 22-16 28-2l-6-6z" fill="#4a86c8"/><path d="M258 1030l9-6 10 6v8h-19z" fill="#eee" stroke="#777" stroke-width=".7"/><path d="M258 1030l9 5 10-5" fill="none" stroke="#777"/>
<!-- chrome -->
<circle cx="329" cy="1029" r="14.500" fill="#f2c530"/><path d="M329 1029L316.400 1021.800A14.500 14.500 0 0 1 341.500 1021.800Z" fill="#d94a3a"/><path d="M329 1029L316.400 1021.800A14.500 14.500 0 0 0 329 1043.500Z" fill="#3fa24a"/><circle cx="329" cy="1029" r="7" fill="#fff"/><circle cx="329" cy="1029" r="5.500" fill="#4a8ae4"/>
<!-- wing -->
<rect x="376" y="1016" width="30" height="30" rx="1" fill="#d9dde2" stroke="#1f5a92" stroke-width="2"/><path d="M379 1045c4-18 12-26 25-28-6 5-9 12-9 17-4 4-10 8-16 11z" fill="#ef9520"/><path d="M382 1046c4-8 10-12 22-18v16z" fill="#f5c058"/>
<!-- JA -->
<path d="M436 1017h3v19c-2 6-7 7-11 4l3-2c2 1 4 1 5-2z" fill="#e2e2e2"/><path d="M447 1045l8-28h3l6 28h-4l-2-8h-5l-2 8z" fill="#1f5fae"/><path d="M442 1017h2v15h-2z" fill="#aaa"/>
<!-- F360 -->
<rect x="499" y="1014" width="32" height="32" fill="#dcedf7"/>
<path d="M509 1018h13v5h-7v5h6v5h-6v9h-6z" fill="#dd8a36"/><text x="519" y="1044" font-size="6" font-weight="bold" fill="#3a9de0">360</text>
<!-- installer -->
<rect x="573" y="1015" width="17" height="15" fill="#8ec8ee" stroke="#1a1a66"/><rect x="563" y="1031" width="6" height="16" fill="#ccc" stroke="#333" stroke-width=".7"/>
<path d="M569 1030h22v-2h-22z" fill="#222"/><circle cx="578" cy="1040" r="7" fill="#c7c9d3" stroke="#444" stroke-width=".7"/><circle cx="578" cy="1040" r="2" fill="#e2c030"/>
<!-- tray -->
<path d="M1396 1033l4.500-4 4.500 4z" fill="#eee"/>
<rect x="1418" y="1024" width="15" height="15" fill="#fff"/><text x="1420" y="1037" font-size="13" font-weight="bold" fill="#0c2a78">ti</text><rect x="1428" y="1024" width="4" height="3" fill="#1fdc30"/>
<g fill="#6ccf3f"><circle cx="1448" cy="1026" r="3"/><circle cx="1453" cy="1029" r="3"/><circle cx="1453" cy="1034" r="3"/><circle cx="1448" cy="1037" r="3"/><circle cx="1443" cy="1034" r="3"/><circle cx="1443" cy="1029" r="3"/></g><circle cx="1448" cy="1031.500" r="2" fill="#eeee30"/>
<g fill="#eee"><path d="M1468 1025l4 2.500-4 2.500-4-2.500zM1477 1025l4 2.500-4 2.500-4-2.500zM1468 1031l4 2.500-4 2.500-4-2.500zM1477 1031l4 2.500-4 2.500-4-2.500z"/></g><circle cx="1477" cy="1035" r="3.500" fill="#3fa24a"/>
<rect x="1490" y="1024" width="7" height="7" fill="#888"/><rect x="1491" y="1031" width="5" height="6" fill="#555"/><circle cx="1501" cy="1035" r="4" fill="#1f8a2a"/><path d="M1499 1035l1.500 1.500 2.500-3" stroke="#fff" fill="none"/>
<path d="M1518 1026h15v12h-15M1525 1038v3M1521 1041h9" fill="none" stroke="#fff" stroke-width="1.200"/><circle cx="1518" cy="1027" r="3" fill="#353535" stroke="#fff"/><rect x="1517" y="1030" width="2" height="7" fill="#fff"/>
<path d="M1538 1028h3l5-4v14l-5-4h-3z" fill="#ddd"/><path d="M1548 1028c1 2 1 4 0 6M1550 1026c2 3 2 7 0 10" stroke="#ccc" fill="none"/>
<text x="1568" y="1035.500" font-size="11.500" fill="#e0e0e0">РУС</text>
<text x="1635" y="1027" text-anchor="middle" font-size="11" fill="#e0e0e0">10:17</text>
<text x="1634" y="1044" text-anchor="middle" font-size="11" fill="#e0e0e0">06.09.2016</text>
</svg>
</body></html>
